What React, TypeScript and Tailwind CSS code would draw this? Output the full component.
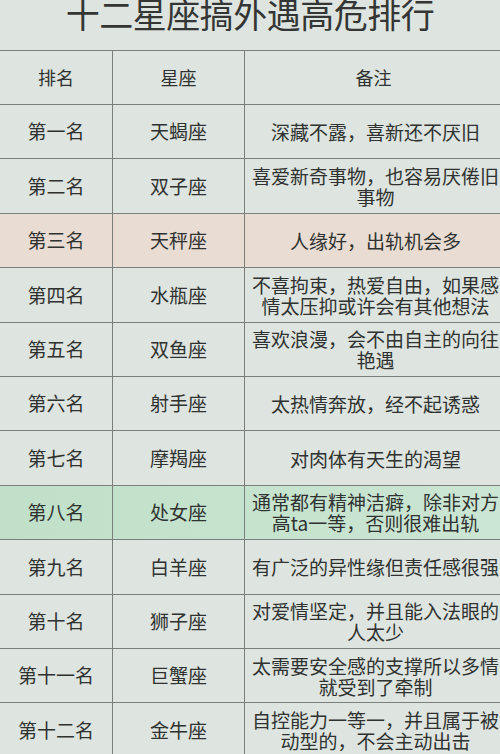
import React from 'react';

type Row = { rank: string; sign: string; note: React.ReactNode; tone?: 'pink' | 'green' };

const rows: Row[] = [
  { rank: '第一名', sign: '天蝎座', note: '深藏不露，喜新还不厌旧' },
  { rank: '第二名', sign: '双子座', note: <>喜爱新奇事物，也容易厌倦旧<br />事物</> },
  { rank: '第三名', sign: '天秤座', note: '人缘好，出轨机会多', tone: 'pink' },
  { rank: '第四名', sign: '水瓶座', note: <>不喜拘束，热爱自由，如果感<br />情太压抑或许会有其他想法</> },
  { rank: '第五名', sign: '双鱼座', note: <>喜欢浪漫，会不由自主的向往<br />艳遇</> },
  { rank: '第六名', sign: '射手座', note: '太热情奔放，经不起诱惑' },
  { rank: '第七名', sign: '摩羯座', note: '对肉体有天生的渴望' },
  { rank: '第八名', sign: '处女座', note: <>通常都有精神洁癖，除非对方<br />高ta一等，否则很难出轨</>, tone: 'green' },
  { rank: '第九名', sign: '白羊座', note: '有广泛的异性缘但责任感很强' },
  { rank: '第十名', sign: '狮子座', note: <>对爱情坚定，并且能入法眼的<br />人太少</> },
  { rank: '第十一名', sign: '巨蟹座', note: <>太需要安全感的支撑所以多情<br />就受到了牵制</> },
  { rank: '第十二名', sign: '金牛座', note: <>自控能力一等一，并且属于被<br />动型的，不会主动出击</> },
];

function rowBg(tone?: Row['tone']) {
  if (tone === 'pink') return 'bg-[#e9dcd2]';
  if (tone === 'green') return 'bg-gradient-to-r from-[#c0e0c9] to-[#cbe6d3]';
  return '';
}

export default function App() {
  return (
    <div
      className="w-[500px] h-[754px] overflow-hidden bg-[#dee4df] text-[#2f3230]"
      style={{ fontFamily: '"Noto Sans CJK SC", "Noto Sans", sans-serif' }}
    >
      <div className="h-[50px] flex justify-center">
        <h1 className="text-[34px] leading-[34px] -mt-[3px] text-[#333634] tracking-[-0.5px]">
          十二星座搞外遇高危排行
        </h1>
      </div>

      <div className="border-t border-[#7a7f7c]">
        <div className="grid grid-cols-[113px_132px_1fr] h-[54px] border-b border-[#7a7f7c] text-[18px]">
          <div className="flex items-center justify-center border-r border-[#7a7f7c]">排名</div>
          <div className="flex items-center justify-center border-r border-[#7a7f7c]">星座</div>
          <div className="flex items-center justify-center pl-[2px]">备注</div>
        </div>

        {rows.map((r) => (
          <div
            key={r.rank}
            className={`grid grid-cols-[113px_132px_1fr] h-[54.4px] border-b border-[#7a7f7c] text-[19px] ${rowBg(r.tone)}`}
          >
            <div className="flex items-center justify-center border-r border-[#7a7f7c]">{r.rank}</div>
            <div className="flex items-center justify-center border-r border-[#7a7f7c]">{r.sign}</div>
            <div className="flex items-center justify-center text-center leading-[21px] pl-[6px] whitespace-nowrap">
              <span>{r.note}</span>
            </div>
          </div>
        ))}
      </div>
    </div>
  );
}
